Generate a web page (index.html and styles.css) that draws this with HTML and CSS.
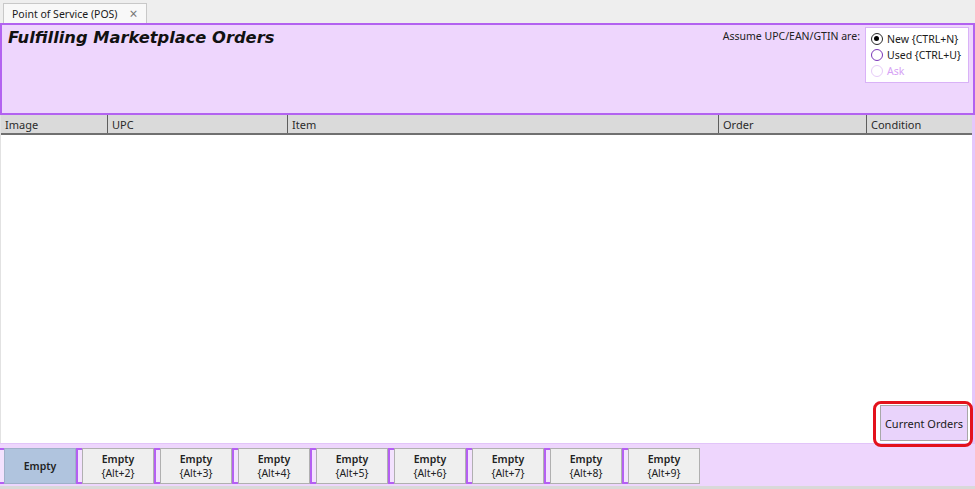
FILE: index.html
```html
<!DOCTYPE html>
<html lang="en">
<head>
    <meta charset="UTF-8">
    <meta name="viewport" content="width=device-width, initial-scale=1.0">
    <title>Point of Service (POS)</title>
    <link rel="stylesheet" href="styles.css">
</head>
<body>
    <div class="tabstrip">
        <div class="tab">Point of Service (POS) <span class="tabClose">&times;</span></div>
    </div>

    <div class="header">
        <h1 class="title">Fulfilling Marketplace Orders</h1>
        <div class="assume">
            <span class="assumeLabel">Assume UPC/EAN/GTIN are:</span>
            <div class="radioBox">
                <div class="radio checked"><span class="ring"></span>New {CTRL+N}</div>
                <div class="radio"><span class="ring"></span>Used {CTRL+U}</div>
                <div class="radio disabled"><span class="ring"></span>Ask</div>
            </div>
        </div>
    </div>

    <div class="grid">
        <div class="gridHead">
            <div class="col colImage">Image</div>
            <div class="col colUpc">UPC</div>
            <div class="col colItem">Item</div>
            <div class="col colOrder">Order</div>
            <div class="col colCondition">Condition</div>
        </div>
        <div class="gridBody">
            <div class="callout">
                <button class="currentOrders">Current Orders</button>
            </div>
        </div>
    </div>

    <div class="slots">
        <div class="slot"><span class="grip"></span><button class="slotBtn active"><b>Empty</b></button></div>
        <div class="slot"><span class="grip"></span><button class="slotBtn"><b>Empty</b><span>{Alt+2}</span></button></div>
        <div class="slot"><span class="grip"></span><button class="slotBtn"><b>Empty</b><span>{Alt+3}</span></button></div>
        <div class="slot"><span class="grip"></span><button class="slotBtn"><b>Empty</b><span>{Alt+4}</span></button></div>
        <div class="slot"><span class="grip"></span><button class="slotBtn"><b>Empty</b><span>{Alt+5}</span></button></div>
        <div class="slot"><span class="grip"></span><button class="slotBtn"><b>Empty</b><span>{Alt+6}</span></button></div>
        <div class="slot"><span class="grip"></span><button class="slotBtn"><b>Empty</b><span>{Alt+7}</span></button></div>
        <div class="slot"><span class="grip"></span><button class="slotBtn"><b>Empty</b><span>{Alt+8}</span></button></div>
        <div class="slot"><span class="grip"></span><button class="slotBtn"><b>Empty</b><span>{Alt+9}</span></button></div>
    </div>
    <div class="statusEdge"></div>
</body>
</html>
```

FILE: styles.css
```css
body {
    margin: 0;
    padding: 0;
    width: 975px;
    height: 489px;
    overflow: hidden;
    font-family: 'Noto Sans', 'Open Sans', sans-serif;
    font-size: 10.5px;
    color: #222;
    background-color: #ffffff;
    display: flex;
    flex-direction: column;
}

/* tab strip */
.tabstrip {
    height: 23px;
    background-color: #eeeeee;
    display: flex;
    align-items: flex-end;
    padding-left: 3px;
    box-sizing: border-box;
}

.tab {
    width: 144px;
    height: 20px;
    box-sizing: border-box;
    border: 1px solid #c8c8c8;
    border-bottom: none;
    background-color: #f8f8f8;
    padding-left: 8px;
    display: flex;
    align-items: center;
    color: #1a1a1a;
    white-space: nowrap;
}

.tabClose {
    margin-left: 12px;
    font-size: 14px;
    color: #777;
    line-height: 1;
}

/* purple header */
.header {
    height: 92px;
    box-sizing: border-box;
    background-color: #eed6fd;
    border: 2px solid #b262f0;
    display: flex;
    justify-content: space-between;
    align-items: flex-start;
    padding: 2px 4px 0 6px;
}

.title {
    margin: 1px 0 0 0;
    font-family: 'DejaVu Sans', 'Liberation Sans', sans-serif;
    font-size: 16.3px;
    line-height: 20px;
    font-weight: bold;
    font-style: italic;
    color: #111;
}

.assume {
    display: flex;
    align-items: flex-start;
    gap: 5px;
}

.assumeLabel {
    margin-top: 2px;
    color: #222;
}

.radioBox {
    width: 104px;
    height: 56px;
    box-sizing: border-box;
    background-color: #ffffff;
    border: 1px solid #d9b2f7;
    padding: 3px 0 0 5px;
}

.radio {
    height: 16px;
    display: flex;
    align-items: center;
    gap: 4px;
    color: #1a1a1a;
    white-space: nowrap;
}

.ring {
    width: 12px;
    height: 12px;
    box-sizing: border-box;
    border: 1.6px solid #7a36b8;
    border-radius: 50%;
    background-color: #fff;
    position: relative;
}

.radio.checked .ring {
    border-color: #2a2a2a;
}

.radio.checked .ring::after {
    content: '';
    position: absolute;
    left: 1.9px;
    top: 1.9px;
    width: 5px;
    height: 5px;
    border-radius: 50%;
    background-color: #000;
}

.radio.disabled {
    color: #d6a1f5;
}

.radio.disabled .ring {
    border-color: #e6cbf8;
}

/* order list */
.grid {
    flex: 1;
    display: flex;
    flex-direction: column;
    border-right: 3px solid #e6c6fb;
    border-left: 1px solid #e2e2e2;
}

.gridHead {
    height: 20px;
    box-sizing: border-box;
    background-color: #dadada;
    border-bottom: 2px solid #707070;
    display: flex;
    font-size: 11px;
}

.col {
    box-sizing: border-box;
    border-right: 1px solid #5e5e5e;
    padding-left: 4px;
    display: flex;
    align-items: center;
    color: #2a2a2a;
}

.colImage { width: 107px; }
.colUpc { width: 180px; }
.colItem { width: 431px; }
.colOrder { width: 148px; }
.colCondition { flex: 1; border-right: none; }

.gridBody {
    flex: 1;
    display: flex;
    justify-content: flex-end;
    align-items: flex-end;
    padding: 0 4px 2px 0;
}

.callout {
    position: relative;
}

/* red annotation ring drawn over the button */
.callout::after {
    content: '';
    position: absolute;
    top: -4px;
    left: -7px;
    right: -5px;
    bottom: -6px;
    border: 3px solid #e3121c;
    border-radius: 8px;
    pointer-events: none;
}

.currentOrders {
    width: 88px;
    height: 36px;
    font-family: inherit;
    font-size: 11px;
    color: #1a1a1a;
    background-color: #e9d3fb;
    border: 1px solid #a8a8a8;
    padding: 0;
}

/* parked order slots */
.slots {
    height: 43px;
    box-sizing: border-box;
    background-color: #eed6fd;
    border-top: 1px solid #e2c4f9;
    display: flex;
    align-items: flex-start;
    padding-top: 4px;
    margin-left: -2px;
}

.slot {
    display: flex;
    height: 36px;
}

.grip {
    width: 6px;
    box-sizing: border-box;
    border: 2px solid #b45ff2;
    border-right: none;
    background-color: #f3e2fe;
    height: 36px;
}

.slotBtn {
    width: 72px;
    height: 36px;
    box-sizing: border-box;
    font-family: inherit;
    font-size: 10.5px;
    line-height: 14px;
    color: #222;
    background-color: #efefef;
    border: 1px solid #b0b0b0;
    padding: 0;
    display: flex;
    flex-direction: column;
    align-items: center;
    justify-content: center;
}

.slotBtn b {
    font-weight: 600;
}

.slotBtn.active {
    background-color: #b0c4de;
    border-color: #9fb1c9;
}

.statusEdge {
    height: 3px;
    background-color: #d9d9d9;
}
```
